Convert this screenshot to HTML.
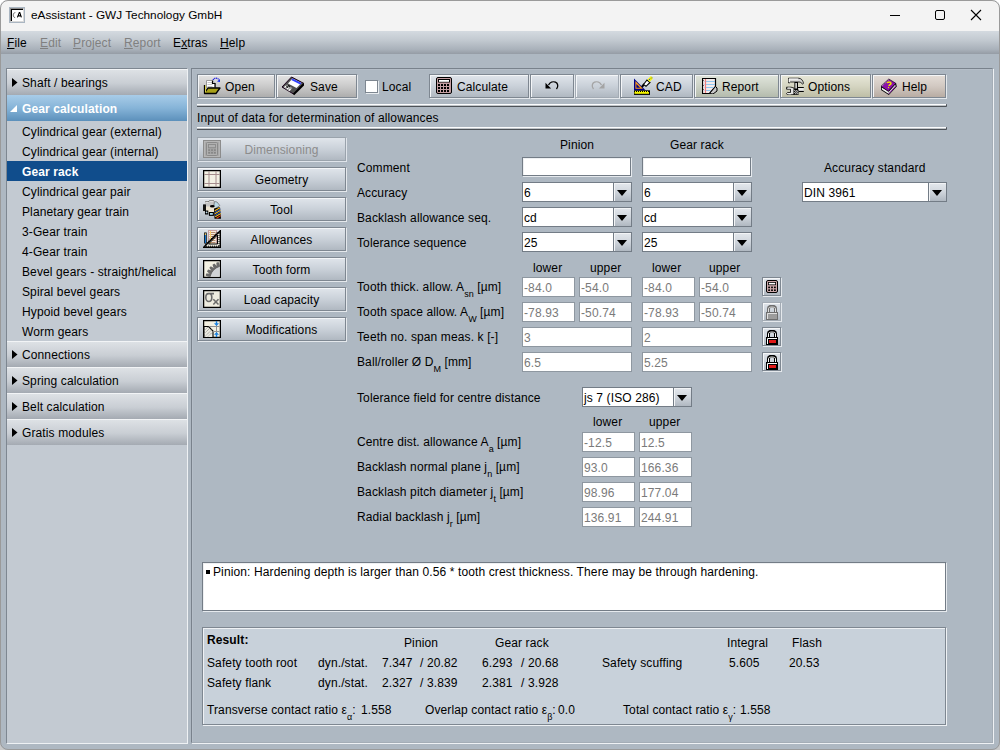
<!DOCTYPE html>
<html><head><meta charset="utf-8">
<style>
*{margin:0;padding:0;box-sizing:border-box}
html,body{width:1000px;height:750px;overflow:hidden;background:linear-gradient(#fff 0,#fff 700px,#c8c8c8 700px)}
body{position:relative;font-family:"Liberation Sans",sans-serif;font-size:12px;color:#000}
.a{position:absolute}
.t{position:absolute;font-size:12px;line-height:14px;white-space:nowrap;letter-spacing:0.12px}
#win{position:absolute;left:0;top:0;width:1000px;height:750px;background:#aeb8c2;border-radius:8px;overflow:hidden}
#frame{position:absolute;left:0;top:0;width:1000px;height:750px;border:1px solid #9a9a9a;border-radius:8px;pointer-events:none}
#title{position:absolute;left:0;top:0;width:1000px;height:31px;background:#f3f3f3}
#menu{position:absolute;left:0;top:31px;width:1000px;height:23px;background:linear-gradient(#d4dae0,#c2c9d0 40%,#a9b1ba 80%,#959ca5)}
.etch{position:absolute;border:1px solid #7e8791;box-shadow:inset 1px 1px 0 #eef1f4,1px 1px 0 #eef1f4}
.btn{position:absolute;border:1px solid #7e8791;box-shadow:inset 1px 1px 0 #f4f6f8,1px 1px 0 #e4e8ec}
.gray{background:linear-gradient(#e4e4e4,#cbcbcb 50%,#adadad)}
.blue{background:linear-gradient(#e0e5eb,#cad1d9 50%,#b0b8c1)}
.green{background:linear-gradient(#e0e5dc,#ccd2c6 50%,#b4bbad)}
.beige{background:linear-gradient(#e7e7d8,#d5d5c2 50%,#bebea6)}
.brown{background:linear-gradient(#e4ddd7,#d2c9c2 50%,#b8aca3)}
.fld{position:absolute;background:#fff;border:1px solid #737c86;height:20px}
.tf{height:19px;box-shadow:1px 1px 0 #e6eaee, inset 1px 1px 0 #eef0f2}
.dis{border-color:#8e97a0}
.fld span{position:absolute;left:1px;top:3px;letter-spacing:0.12px;font-size:12px;line-height:14px;white-space:nowrap}
.dis span{color:#7a7a7a}
.arr{position:absolute;right:0;top:0;width:18px;height:18px;border-left:1px solid #737c86;background:linear-gradient(#e4e8ed,#cfd5dc 50%,#b0b8c1);box-shadow:inset 1px 1px 0 #f2f4f6}
.arr:after{content:"";position:absolute;left:3px;top:7px;border-left:5px solid transparent;border-right:5px solid transparent;border-top:6px solid #000}
.hdr{position:absolute;left:7px;width:180px;height:26px;background:linear-gradient(#f2f4f6 0,#f2f4f6 1px,#dde1e5 1px,#c9ced4 55%,#a4aab2)}
.tri{position:absolute;left:5px;top:9px;width:6px;height:9px;background:#000;clip-path:polygon(0 0,5.5px 4.5px,0 9px)}
.sep{width:750px;height:3px;background:linear-gradient(#fbfcfd 0,#fbfcfd 1px,#d6dade 1px,#a9aeb3 2px,#4c5157 2px,#4c5157 3px);border-right:1px solid #4c5157;border-radius:0 1px 1px 0}
sub{font-size:9px;vertical-align:baseline;position:relative;top:5.5px;letter-spacing:0}
</style></head><body>
<div id="win">
 <div id="title">
  <svg class="a" style="left:9px;top:7px" width="16" height="16" viewBox="0 0 16 16">
   <rect x=".5" y=".5" width="15" height="15" fill="#cfcfcf" stroke="#aab6c2"/>
   <path d="M1 1h14L1 15z" fill="#8a8a8a"/>
   <path d="M15 1v14H1z" fill="#dadada"/>
   <rect x="2" y="2" width="12" height="12" fill="#000"/>
   <rect x="3" y="3" width="11" height="11" fill="#fff"/>
   <path d="M6.3 5.6c-1.6 0-2 1.6-2 2.6s.5 2.4 1.8 2.4" fill="none" stroke="#555" stroke-width=".9"/>
   <path d="M8.4 10.4l1.9-4.8h.5l1.6 4.8M9.1 8.9h2.8" fill="none" stroke="#000" stroke-width="1.1"/>
  </svg>
  <div class="t" style="left:31px;top:8px;font-size:11.8px;letter-spacing:0">eAssistant - GWJ Technology GmbH</div>
  <div class="a" style="left:890px;top:15px;width:10px;height:1px;background:#000"></div>
  <div class="a" style="left:935px;top:10px;width:10px;height:10px;border:1px solid #000;border-radius:2px"></div>
  <svg class="a" style="left:970px;top:9px" width="12" height="12"><path d="M1 1L11 11M11 1L1 11" stroke="#000" stroke-width="1.1"/></svg>
 </div>
 <div id="menu">
  <div class="t" style="left:7px;top:5px"><u>F</u>ile</div>
  <div class="t" style="left:40px;top:5px;color:#808080"><u>E</u>dit</div>
  <div class="t" style="left:73px;top:5px;color:#808080"><u>P</u>roject</div>
  <div class="t" style="left:124px;top:5px;color:#808080"><u>R</u>eport</div>
  <div class="t" style="left:173px;top:5px">E<u>x</u>tras</div>
  <div class="t" style="left:220px;top:5px"><u>H</u>elp</div>
 </div>
 <!-- SIDEBAR -->
 <div class="a" style="left:6px;top:68px;width:182px;height:676px;background:#c3cad2;border-top:1px solid #7e8791;border-left:1px solid #7e8791;border-right:1px solid #eef1f4;border-bottom:1px solid #eef1f4"></div>
 <div class="hdr" style="top:69px"><div class="tri"></div><div class="t" style="left:15px;top:7px">Shaft / bearings</div></div>
 <div class="a" style="left:7px;top:95px;width:180px;height:26px;background:linear-gradient(#a8cce8,#86b4d8 50%,#5c90bb)"></div>
 <svg class="a" style="left:10px;top:104px" width="8" height="9"><path d="M0 8L7 1V8z" fill="#fff"/></svg>
 <div class="t" style="left:22px;top:102px;color:#fff;font-weight:bold">Gear calculation</div>
 <div class="a" style="left:7px;top:161px;width:180px;height:20px;background:#104d8c"></div>
 <div class="t" style="left:22px;top:125px">Cylindrical gear (external)</div>
 <div class="t" style="left:22px;top:145px">Cylindrical gear (internal)</div>
 <div class="t" style="left:22px;top:165px;color:#fff;font-weight:bold">Gear rack</div>
 <div class="t" style="left:22px;top:185px">Cylindrical gear pair</div>
 <div class="t" style="left:22px;top:205px">Planetary gear train</div>
 <div class="t" style="left:22px;top:225px">3-Gear train</div>
 <div class="t" style="left:22px;top:245px">4-Gear train</div>
 <div class="t" style="left:22px;top:265px">Bevel gears - straight/helical</div>
 <div class="t" style="left:22px;top:285px">Spiral bevel gears</div>
 <div class="t" style="left:22px;top:305px">Hypoid bevel gears</div>
 <div class="t" style="left:22px;top:325px">Worm gears</div>
 <div class="hdr" style="top:341px"><div class="tri"></div><div class="t" style="left:15px;top:7px">Connections</div></div>
 <div class="hdr" style="top:367px"><div class="tri"></div><div class="t" style="left:15px;top:7px">Spring calculation</div></div>
 <div class="hdr" style="top:393px"><div class="tri"></div><div class="t" style="left:15px;top:7px">Belt calculation</div></div>
 <div class="hdr" style="top:419px"><div class="tri"></div><div class="t" style="left:15px;top:7px">Gratis modules</div></div>

 <!-- CONTENT PANEL -->
 <div class="a" style="left:191px;top:68px;width:802px;height:675px;border:1px solid #79828c;border-right-color:#a4adb6;border-bottom-color:#a4adb6;box-shadow:inset 1px 1px 0 #b5bec8,1px 1px 0 #eef1f4"></div>

 <!-- TOOLBAR -->
 <div class="btn gray" style="left:197px;top:74px;width:78px;height:24px"></div>
 <div class="btn gray" style="left:276px;top:74px;width:81px;height:24px"></div>
 <div class="a" style="left:365px;top:80px;width:13px;height:13px;background:#fff;border:1px solid #7e8791;box-shadow:1px 1px 0 #e8ecef"></div>
 <div class="btn blue" style="left:429px;top:74px;width:100px;height:24px"></div>
 <div class="btn blue" style="left:530px;top:74px;width:44px;height:24px"></div>
 <div class="btn blue" style="left:575px;top:74px;width:44px;height:24px;border-color:#a3abb4"></div>
 <div class="btn blue" style="left:620px;top:74px;width:73px;height:24px"></div>
 <div class="btn green" style="left:694px;top:74px;width:85px;height:24px"></div>
 <div class="btn beige" style="left:780px;top:74px;width:91px;height:24px"></div>
 <div class="btn brown" style="left:872px;top:74px;width:74px;height:24px"></div>
 <div class="t" style="left:225px;top:80px">Open</div>
 <div class="t" style="left:310px;top:80px">Save</div>
 <div class="t" style="left:382px;top:80px">Local</div>
 <div class="t" style="left:457px;top:80px">Calculate</div>
 <div class="t" style="left:656px;top:80px">CAD</div>
 <div class="t" style="left:722px;top:80px">Report</div>
 <div class="t" style="left:808px;top:80px">Options</div>
 <div class="t" style="left:902px;top:80px">Help</div>

 <!-- open icon -->
 <svg class="a" style="left:200px;top:74px" width="24" height="24" viewBox="0 0 24 24">
  <path d="M6.5 6.5h5.5l3.5 3.5v4h-9z" fill="#fff" stroke="#9a9a9a" stroke-width="1"/>
  <path d="M7.5 8.5h5M7.5 10.5h5M7.5 12.5h5" stroke="#c8c8c8" stroke-width="1"/>
  <path d="M12.5 6.5v3h3" fill="none" stroke="#000" stroke-width="1.2"/>
  <path d="M15 9.5v4" stroke="#000" stroke-width="1.2"/>
  <path d="M4.5 11v8.5h11.5l4-5.5h-12l-3.5 5" fill="#a8a018" stroke="#000" stroke-width="1.3" stroke-linejoin="round"/>
  <path d="M5.5 11.5v7" stroke="#d8d040" stroke-width="1"/>
  <path d="M13 6c1.5-2.5 4.5-2.5 6 0" fill="none" stroke="#2020e0" stroke-width="1.2" stroke-dasharray="1.2 .6"/>
  <path d="M17 7.5l3-2.5v3z" fill="#1830f0"/>
 </svg>
 <!-- save icon -->
 <svg class="a" style="left:280px;top:74px" width="24" height="24" viewBox="0 0 24 24">
  <path d="M2 13L11.5 3 24 9.5 13.5 20z" fill="#505050" stroke="#1a001a" stroke-width="1"/>
  <path d="M12.5 4.5l9 4.5-5 5-8.5-4.5z" fill="#fff"/>
  <path d="M12.5 4.5l9 4.5-1.3 1.4-8.9-4.5z" fill="#3040ff"/>
  <path d="M4 13.5l3-3 5.5 3.5-3.2 3.5z" fill="#9a9a9a"/>
  <path d="M4.5 13.5l1.5-1.5M7 15l1.5-1.5M9 16.5l1.5-1.5" stroke="#fff" stroke-width="1.2"/>
  <path d="M6.5 12.5l1.5 1M8 11.5l2 1" stroke="#000" stroke-width="1.2"/>
  <path d="M13.5 20.5L24 10" stroke="#000" stroke-width="2"/>
 </svg>
 <!-- calc icon -->
 <svg class="a" style="left:436px;top:77px" width="16" height="17" viewBox="0 0 16 17">
  <rect x="0.5" y="0.5" width="15" height="16" rx="1.5" fill="#c49ea2" stroke="#000" stroke-width="1"/>
  <rect x="2" y="2" width="12" height="3.5" fill="#000"/>
  <rect x="3" y="3" width="10" height="1.8" fill="#fff"/>
  <g fill="#000"><rect x="2" y="7" width="2" height="2"/><rect x="5" y="7" width="2" height="2"/><rect x="8" y="7" width="2" height="2"/><rect x="11" y="7" width="2" height="2"/>
  <rect x="2" y="10" width="2" height="2"/><rect x="5" y="10" width="2" height="2"/><rect x="8" y="10" width="2" height="2"/><rect x="11" y="10" width="2" height="2"/>
  <rect x="2" y="13" width="2" height="2"/><rect x="5" y="13" width="2" height="2"/><rect x="8" y="13" width="2" height="2"/><rect x="11" y="13" width="2" height="2"/></g>
 </svg>
 <!-- undo -->
 <svg class="a" style="left:544px;top:80px" width="16" height="11" viewBox="0 0 16 11">
  <path d="M4.5 5C6 2.2 9 1.2 11.5 2.2c2.6 1.1 3 4.3 1 6.8" fill="none" stroke="#000" stroke-width="1.3"/>
  <path d="M1.5 2.8v5.6h5.6z" fill="#000"/>
 </svg>
 <!-- redo -->
 <svg class="a" style="left:590px;top:80px" width="16" height="11" viewBox="0 0 16 11">
  <path d="M11.5 5C10 2.2 7 1.2 4.5 2.2c-2.6 1.1-3 4.3-1 6.8" fill="none" stroke="#a4a4a4" stroke-width="1.3"/>
  <path d="M14.5 2.8v5.6H8.9z" fill="#a4a4a4"/>
 </svg>
 <!-- CAD -->
 <svg class="a" style="left:633px;top:76px" width="20" height="20" viewBox="0 0 20 20">
  <path d="M1 2.5v11.8h11.5z" fill="#00008a"/>
  <path d="M2.4 5v7.8h7.6z" fill="#ff9a18"/>
  <path d="M3.4 8v3.8h3.8z" fill="#00008a"/>
  <rect x="1" y="14.3" width="16" height="4.6" fill="#000"/>
  <rect x="1.5" y="16" width="14.5" height="1.8" fill="#f4f400"/>
  <path d="M2 15.5h1M4 15.5h1M6 15.5h1M8 15.5h1M10 15.5h1M12 15.5h1M14 15.5h1" stroke="#f4f400" stroke-width="1"/>
  <path d="M8.8 11l2.5-3" stroke="#000" stroke-width="2"/>
  <path d="M10.5 8.5l3.5-4.5 3 2.5-4 3.8z" fill="#fff" stroke="#000" stroke-width="1.1"/>
  <path d="M14.5 3.5l3.5-3.5 2 2.2-3.5 3.8z" fill="#f4f400"/>
  <path d="M16 4l1-1M18 2.5l1-1" stroke="#2040c0" stroke-width=".9"/>
 </svg>
 <!-- report -->
 <svg class="a" style="left:702px;top:78px" width="16" height="16" viewBox="0 0 16 16">
  <path d="M.5 .5h13v8l-6 7h-7z" fill="#f4ecec" stroke="#000" stroke-width="1.2"/>
  <path d="M2.5 3.5h10.5M2.5 6.5h10.5M2.5 9.5h9M2.5 12.5h6" stroke="#90c8f0" stroke-width="1"/>
  <path d="M3.5 1v14" stroke="#f08080" stroke-width="1.2"/>
  <path d="M1.5 2.5v.5M1.5 7v.5M1.5 11.5v.5" stroke="#000" stroke-width="1"/>
  <path d="M7.5 15.5l6-7 1.5 1.5v3l-4 3z" fill="#c8c8c8" stroke="#000" stroke-width="1"/>
 </svg>
 <!-- options -->
 <svg class="a" style="left:786px;top:77px" width="18" height="18" viewBox="0 0 18 18">
  <path d="M2.5 1.2h10c2.5 0 4.5 2 5 5.2l-1 .8c-.8-1.6-2-2.2-3.5-2.2H4.5l-1 .8h-1z" fill="#d8d8d8" stroke="#000" stroke-width=".8"/>
  <path d="M3 2h9" stroke="#fff" stroke-width="1.2"/>
  <path d="M3.2 2v3" stroke="#fff" stroke-width="1"/>
  <rect x="8.4" y="5" width="3.6" height="8" fill="#000"/>
  <rect x="9.4" y="6" width="1.4" height="5.5" fill="#fff"/>
  <path d="M12 10.5h5.8v4H12z" fill="#cfcfcf"/>
  <path d="M12 10.5h5.8M12 14.5h5.8" stroke="#000" stroke-width="1"/>
  <path d="M12.5 12h5" stroke="#fff" stroke-width="1"/>
  <path d="M.5 10.2h4.5l3 .8v6.5l-3 .3H1.5l-1-1.3 1-1h3V12.2H.5z" fill="#e4e4e4" stroke="#000" stroke-width=".8"/>
  <path d="M2 11h2.5M2.5 16.8h2.5" stroke="#fff" stroke-width=".8"/>
  <rect x="7.8" y="12.6" width="4.8" height="5.2" fill="#000"/>
  <g fill="#fff"><rect x="8.3" y="13.1" width="1" height="1"/><rect x="10.3" y="13.1" width="1" height="1"/><rect x="9.3" y="14.1" width="1" height="1"/><rect x="11.3" y="14.1" width="1" height="1"/><rect x="8.3" y="15.1" width="1" height="1"/><rect x="10.3" y="15.1" width="1" height="1"/><rect x="9.3" y="16.1" width="1" height="1"/><rect x="11.3" y="16.1" width="1" height="1"/></g>
 </svg>
 <!-- help -->
 <svg class="a" style="left:880px;top:78px" width="18" height="18" viewBox="0 0 18 18">
  <path d="M1 8.5v3.5l7.8 5 8-8.5-.8-3.5z" fill="#000"/>
  <path d="M1.8 9.5v2l7 4.5v-2.2z" fill="#f0f0f0"/>
  <path d="M8.8 13.8v2.2l7-7.5-.6-2z" fill="#d8d8d8"/>
  <path d="M8.8 15.6l7-7.6" stroke="#9010b0" stroke-width=".9"/>
  <path d="M8.8 1L1 8.3l7.3 5L15.8 5.3z" fill="#8a12a8" stroke="#000" stroke-width=".6"/>
  <path d="M2 8l6.8-6.2" stroke="#d8c0e0" stroke-width=".8" stroke-dasharray="1 1"/>
  <path d="M7.2 5.2c.3-1.6 3.8-1.8 3.8.2 0 1.3-1.9 1.3-2 2.6" fill="none" stroke="#f0e800" stroke-width="1.5"/>
  <path d="M8 9.3l1 .4" stroke="#f0e800" stroke-width="1.4"/>
 </svg>


 <!-- SEPARATORS -->
 <div class="a sep" style="left:197px;top:104px"></div>
 <div class="t" style="left:197px;top:111px">Input of data for determination of allowances</div>
 <div class="a sep" style="left:197px;top:127px"></div>

 <!-- NAV BUTTONS -->
 <div class="btn blue" style="left:197px;top:137px;width:149px;height:24px;border-color:#9aa3ac;box-shadow:inset 1px 1px 0 #dfe4ea,1px 1px 0 #dfe4ea"></div>
 <div class="btn blue" style="left:197px;top:167px;width:149px;height:24px"></div>
 <div class="btn blue" style="left:197px;top:197px;width:149px;height:24px"></div>
 <div class="btn blue" style="left:197px;top:227px;width:149px;height:24px"></div>
 <div class="btn blue" style="left:197px;top:257px;width:149px;height:24px"></div>
 <div class="btn blue" style="left:197px;top:287px;width:149px;height:24px"></div>
 <div class="btn blue" style="left:197px;top:317px;width:149px;height:24px"></div>
 <div class="t" style="left:221px;width:121px;text-align:center;top:143px;color:#8c8c8c">Dimensioning</div>
 <div class="t" style="left:221px;width:121px;text-align:center;top:173px">Geometry</div>
 <div class="t" style="left:221px;width:121px;text-align:center;top:203px">Tool</div>
 <div class="t" style="left:221px;width:121px;text-align:center;top:233px">Allowances</div>
 <div class="t" style="left:221px;width:121px;text-align:center;top:263px">Tooth form</div>
 <div class="t" style="left:221px;width:121px;text-align:center;top:293px">Load capacity</div>
 <div class="t" style="left:221px;width:121px;text-align:center;top:323px">Modifications</div>

 <!-- dim icon -->
 <svg class="a" style="left:203px;top:140px" width="18" height="18" viewBox="0 0 18 18">
  <rect x=".5" y=".5" width="17" height="17" fill="#a9a9a9" stroke="#8c8c8c"/>
  <rect x="1.5" y="1.5" width="15" height="15" fill="none" stroke="#b6b6b6"/>
  <rect x="3.5" y="2.5" width="11" height="13" rx="1" fill="#a4a4a4" stroke="#8a8a8a" stroke-width="1"/>
  <rect x="4.5" y="3.5" width="9" height="11" fill="none" stroke="#b4b4b4" stroke-width=".8"/>
  <rect x="5.5" y="4.5" width="7" height="3.2" fill="#b0b0b0" stroke="#8a8a8a" stroke-width=".9"/>
  <g fill="#858585"><rect x="5.2" y="9.3" width="1.8" height="1.6"/><rect x="8.1" y="9.3" width="1.8" height="1.6"/><rect x="11" y="9.3" width="1.8" height="1.6"/><rect x="5.2" y="12" width="1.8" height="1.6"/><rect x="8.1" y="12" width="1.8" height="1.6"/><rect x="11" y="12" width="1.8" height="1.6"/></g>
 </svg>
 <!-- geometry icon -->
 <svg class="a" style="left:203px;top:170px" width="18" height="18" viewBox="0 0 18 18">
  <rect x=".6" y=".6" width="16.8" height="16.8" fill="#f3f1e4" stroke="#000" stroke-width="1.3"/>
  <path d="M6 1.2v15.6M13 1.2v15.6M1.2 4.5h15.6M1.2 13.5h15.6" stroke="#a48c8c" stroke-width="1"/>
 </svg>
 <!-- tool icon -->
 <svg class="a" style="left:203px;top:200px" width="18" height="19" viewBox="0 0 18 19">
  <path d="M0 4.5h2V1h4.2V0h4.8v3h1l1 2L11 9 8 12H0z" fill="#c4c4c4"/>
  <path d="M2.5 1.5h3.5M6.5 .5h4M.5 5h2" stroke="#606060" stroke-width="1"/>
  <path d="M3 2.2h2.5M7 1.2h3" stroke="#e8e8e8" stroke-width="1"/>
  <rect x="0" y="4.5" width="3" height="6.5" fill="#111"/>
  <path d="M11.5 1.5l2.5.5 2.8 3.5-4 3-2.3-1z" fill="#bcd8e4" stroke="#666" stroke-width=".7"/>
  <path d="M3 6.5h8.5l2 2v4.5H3z" fill="#ece4d2"/>
  <ellipse cx="9.3" cy="6.3" rx="2.4" ry="1.2" fill="#000"/>
  <path d="M2 10.5h3.3v4H2z" fill="#000"/>
  <circle cx="3.6" cy="12.4" r=".9" fill="#bcd8e8"/>
  <rect x="5.9" y="12" width="5" height="3.9" fill="#000"/>
  <rect x="7" y="13" width="2.8" height="1.8" fill="#a8d8ec"/>
  <path d="M11 8.5l6-1.5 1 11.8h-6.5z" fill="#000"/>
  <path d="M11.8 10.8l5.2-3M11.8 13.8l5.6-3.2M12.2 16.8l5.6-3.2" stroke="#f4b820" stroke-width="1.1"/>
  <path d="M11.8 12.3l5.5-3.1M12 15.3l5.6-3.2" stroke="#2458c8" stroke-width="1"/>
  <path d="M13.5 18.2l4.2-2.6" stroke="#e84818" stroke-width="1.1"/>
 </svg>
 <!-- allowances icon -->
 <svg class="a" style="left:203px;top:230px" width="18" height="18" viewBox="0 0 18 18">
  <rect x="5.5" y=".5" width="8" height="14" fill="#f4ece0" stroke="#c8a0a0" stroke-width="1"/>
  <path d="M6.5 2.5h6M6.5 4.5h6M6.5 6.5h6M6.5 8.5h6M6.5 10.5h6M6.5 12.5h6" stroke="#b08060" stroke-width=".9"/>
  <path d="M7.5 1v13" stroke="#f8d070" stroke-width="1"/>
  <path d="M.5 17.5L17.5 .5v17z M5.5 14h9V5z" fill="#eceadf" fill-rule="evenodd"/>
  <path d="M.7 17.3L17.3.7v16.6z" fill="none" stroke="#000" stroke-width="1.4"/>
  <path d="M5.5 14h9V5z" fill="none" stroke="#000" stroke-width="1"/>
  <path d="M2.5 14.5l12-12" stroke="#000" stroke-width="1.1" stroke-dasharray="1 1"/>
  <path d="M16 3v13.5M3 16.2h13" stroke="#000" stroke-width="1" stroke-dasharray="1 1"/>
  <path d="M2.4 2.5v11" stroke="#000" stroke-width="2.6"/>
  <path d="M2.4 5v8" stroke="#1878d0" stroke-width="1.2"/>
  <path d="M2.4 3.2v1.8" stroke="#e8c870" stroke-width="1.2"/>
 </svg>
 <!-- tooth form icon -->
 <svg class="a" style="left:203px;top:260px" width="18" height="18" viewBox="0 0 18 18">
  <rect x=".6" y=".6" width="16.8" height="16.8" fill="#f4f2e4" stroke="#000" stroke-width="1.3"/>
  <clipPath id="cTF"><rect x="1.3" y="1.3" width="15.4" height="15.4"/></clipPath>
  <g clip-path="url(#cTF)">
   <circle cx="20.1" cy="19.1" r="13.6" fill="#d0d3d6" stroke="#6a6a6a" stroke-width="1.6"/>
   <g fill="#6a6a6a"><path d="M17.900000000000002 6.100000000000001 L19.0 1.3000000000000007 H21.200000000000003 L22.3 6.100000000000001z" transform="rotate(-75 20.1 19.1)"/><path d="M17.900000000000002 6.100000000000001 L19.0 1.3000000000000007 H21.200000000000003 L22.3 6.100000000000001z" transform="rotate(-61 20.1 19.1)"/><path d="M17.900000000000002 6.100000000000001 L19.0 1.3000000000000007 H21.200000000000003 L22.3 6.100000000000001z" transform="rotate(-47 20.1 19.1)"/><path d="M17.900000000000002 6.100000000000001 L19.0 1.3000000000000007 H21.200000000000003 L22.3 6.100000000000001z" transform="rotate(-33 20.1 19.1)"/><path d="M17.900000000000002 6.100000000000001 L19.0 1.3000000000000007 H21.200000000000003 L22.3 6.100000000000001z" transform="rotate(-19 20.1 19.1)"/><path d="M17.900000000000002 6.100000000000001 L19.0 1.3000000000000007 H21.200000000000003 L22.3 6.100000000000001z" transform="rotate(-5 20.1 19.1)"/></g>
  </g>
 </svg>
 <!-- load capacity icon -->
 <svg class="a" style="left:203px;top:290px" width="18" height="18" viewBox="0 0 18 18">
  <rect x=".6" y=".6" width="16.8" height="16.8" fill="#eeece0" stroke="#000" stroke-width="1.3"/>
  <path d="M11 3.6H5.5C3.8 3.6 2.8 5.5 2.8 7.5s1.2 4 3 4 3-1.8 3-4-.8-3.5-1.8-3.9" fill="none" stroke="#6c6c6c" stroke-width="1.6"/>
  <path d="M10.3 9.3l5.2 5.2M15.5 9.3l-5.2 5.2" stroke="#6c6c6c" stroke-width="1.6"/>
 </svg>
 <!-- modifications icon -->
 <svg class="a" style="left:203px;top:320px" width="18" height="18" viewBox="0 0 18 18">
  <rect x=".6" y=".6" width="16.8" height="16.8" fill="#f2f0e2" stroke="#000" stroke-width="1.3"/>
  <path d="M1 6.5h4.5l4.5 4.5v6.5H1z" fill="#ecebe2" stroke="#000" stroke-width="1.1"/>
  <path d="M1.5 10.5l4-4M1.5 13.5l6-6M2 16.5l7-7M5 16.5l4.5-4.5" stroke="#8a8a8a" stroke-width="1" stroke-dasharray="1 .8"/>
  <path d="M6 6.5h10.5M10 11.5h6.5" stroke="#909090" stroke-width="1"/>
  <path d="M13.5 1v16" stroke="#909090" stroke-width="1"/>
  <path d="M13.5 1.2v3M13.5 14v3" stroke="#1880e0" stroke-width="1.4"/>
  <path d="M11 3.2h5l-2.5 2.8zM11 14.8h5l-2.5-2.8z" fill="#1880e0"/>
 </svg>

 <!-- FORM -->
 <div class="t" style="left:560px;top:138px">Pinion</div>
 <div class="t" style="left:670px;top:138px">Gear rack</div>
 <div class="t" style="left:357px;top:161px">Comment</div>
 <div class="t" style="left:357px;top:186px">Accuracy</div>
 <div class="t" style="left:357px;top:211px">Backlash allowance seq.</div>
 <div class="t" style="left:357px;top:236px">Tolerance sequence</div>
 <div class="fld tf" style="left:522px;top:157px;width:109px"></div>
 <div class="fld tf" style="left:642px;top:157px;width:109px"></div>
 <div class="fld" style="left:522px;top:182px;width:110px"><span>6</span><div class="arr"></div></div>
 <div class="fld" style="left:642px;top:182px;width:110px"><span>6</span><div class="arr"></div></div>
 <div class="fld" style="left:522px;top:207px;width:110px"><span>cd</span><div class="arr"></div></div>
 <div class="fld" style="left:642px;top:207px;width:110px"><span>cd</span><div class="arr"></div></div>
 <div class="fld" style="left:522px;top:232px;width:110px"><span>25</span><div class="arr"></div></div>
 <div class="fld" style="left:642px;top:232px;width:110px"><span>25</span><div class="arr"></div></div>
 <div class="t" style="left:824px;top:161px">Accuracy standard</div>
 <div class="fld" style="left:802px;top:182px;width:145px"><span>DIN 3961</span><div class="arr"></div></div>

 <div class="t" style="left:533px;top:261px">lower</div>
 <div class="t" style="left:590px;top:261px">upper</div>
 <div class="t" style="left:652px;top:261px">lower</div>
 <div class="t" style="left:709px;top:261px">upper</div>
 <div class="t" style="left:357px;top:280px">Tooth thick. allow. A<sub>sn</sub> [&micro;m]</div>
 <div class="t" style="left:357px;top:305px">Tooth space allow. A<sub>W</sub> [&micro;m]</div>
 <div class="t" style="left:357px;top:330px">Teeth no. span meas. k [-]</div>
 <div class="t" style="left:357px;top:355px">Ball/roller &Oslash; D<sub>M</sub> [mm]</div>
 <div class="fld dis" style="left:522px;top:277px;width:53px"><span>-84.0</span></div>
 <div class="fld dis" style="left:579px;top:277px;width:53px"><span>-54.0</span></div>
 <div class="fld dis" style="left:642px;top:277px;width:53px"><span>-84.0</span></div>
 <div class="fld dis" style="left:699px;top:277px;width:53px"><span>-54.0</span></div>
 <div class="fld dis" style="left:522px;top:302px;width:53px"><span>-78.93</span></div>
 <div class="fld dis" style="left:579px;top:302px;width:53px"><span>-50.74</span></div>
 <div class="fld dis" style="left:642px;top:302px;width:53px"><span>-78.93</span></div>
 <div class="fld dis" style="left:699px;top:302px;width:53px"><span>-50.74</span></div>
 <div class="fld dis" style="left:522px;top:327px;width:110px"><span>3</span></div>
 <div class="fld dis" style="left:642px;top:327px;width:110px"><span>2</span></div>
 <div class="fld dis" style="left:522px;top:352px;width:110px"><span>6.5</span></div>
 <div class="fld dis" style="left:642px;top:352px;width:110px"><span>5.25</span></div>
 <div class="btn blue" style="left:762px;top:277px;width:19px;height:19px"></div>
 <div class="btn blue" style="left:762px;top:302px;width:19px;height:19px;border-color:#a3abb4"></div>
 <div class="btn blue" style="left:762px;top:327px;width:19px;height:19px"></div>
 <div class="btn blue" style="left:762px;top:352px;width:19px;height:19px"></div>

 <svg class="a" style="left:766px;top:280px" width="12" height="13" viewBox="0 0 12 13">
  <rect x=".5" y=".5" width="11" height="12" rx="1.5" fill="#cca8aa" stroke="#000" stroke-width="1"/>
  <rect x="2" y="2" width="8" height="3.2" fill="#000"/><rect x="2.8" y="2.8" width="6.4" height="1.6" fill="#fff"/>
  <g fill="#000"><rect x="2.2" y="6.6" width="1.8" height="1.6"/><rect x="5.1" y="6.6" width="1.8" height="1.6"/><rect x="8" y="6.6" width="1.8" height="1.6"/><rect x="2.2" y="9.4" width="1.8" height="1.6"/><rect x="5.1" y="9.4" width="1.8" height="1.6"/><rect x="8" y="9.4" width="1.8" height="1.6"/></g>
 </svg>
 <svg class="a" style="left:766px;top:305px" width="12" height="15" viewBox="0 0 12 15">
  <path d="M2.5 8V3.2C2.5 .6 9.5 .6 9.5 3.2V8" fill="none" stroke="#6e6e6e" stroke-width="3"/>
  <path d="M2.5 7.5V3.4C2.5 1.6 9.5 1.6 9.5 3.4V7.5" fill="none" stroke="#e0e0e0" stroke-width="1"/>
  <rect x=".5" y="7.5" width="11" height="7" fill="#9c9c9c" stroke="#6e6e6e" stroke-width="1"/>
  <path d="M1.5 14V8.5h9.5" fill="none" stroke="#e0e0e0" stroke-width="1"/>
  <rect x="3" y="10" width="7" height="3" fill="#9c9c9c"/>
 </svg>
 <svg class="a" style="left:766px;top:330px" width="12" height="15" viewBox="0 0 12 15">
  <path d="M2.5 8V3.2C2.5 .6 9.5 .6 9.5 3.2V8" fill="none" stroke="#000" stroke-width="3"/>
  <path d="M2.5 7.5V3.4C2.5 1.6 9.5 1.6 9.5 3.4V7.5" fill="none" stroke="#fff" stroke-width="1"/>
  <rect x=".5" y="7.5" width="11" height="7" fill="#000" stroke="#000" stroke-width="1"/>
  <path d="M1.5 14V8.5h9.5" fill="none" stroke="#fff" stroke-width="1"/>
  <rect x="3" y="10" width="7" height="3" fill="#e01818"/>
 </svg>
 <svg class="a" style="left:766px;top:355px" width="12" height="15" viewBox="0 0 12 15">
  <path d="M2.5 8V3.2C2.5 .6 9.5 .6 9.5 3.2V8" fill="none" stroke="#000" stroke-width="3"/>
  <path d="M2.5 7.5V3.4C2.5 1.6 9.5 1.6 9.5 3.4V7.5" fill="none" stroke="#fff" stroke-width="1"/>
  <rect x=".5" y="7.5" width="11" height="7" fill="#000" stroke="#000" stroke-width="1"/>
  <path d="M1.5 14V8.5h9.5" fill="none" stroke="#fff" stroke-width="1"/>
  <rect x="3" y="10" width="7" height="3" fill="#e01818"/>
 </svg>

 <div class="t" style="left:357px;top:391px">Tolerance field for centre distance</div>
 <div class="fld" style="left:582px;top:387px;width:110px"><span>js 7 (ISO 286)</span><div class="arr"></div></div>
 <div class="t" style="left:593px;top:415px">lower</div>
 <div class="t" style="left:649px;top:415px">upper</div>
 <div class="t" style="left:357px;top:435px">Centre dist. allowance A<sub>a</sub> [&micro;m]</div>
 <div class="t" style="left:357px;top:460px">Backlash normal plane j<sub>n</sub> [&micro;m]</div>
 <div class="t" style="left:357px;top:485px">Backlash pitch diameter j<sub>t</sub> [&micro;m]</div>
 <div class="t" style="left:357px;top:510px">Radial backlash j<sub>r</sub> [&micro;m]</div>
 <div class="fld dis" style="left:582px;top:432px;width:53px"><span>-12.5</span></div>
 <div class="fld dis" style="left:639px;top:432px;width:53px"><span>12.5</span></div>
 <div class="fld dis" style="left:582px;top:457px;width:53px"><span>93.0</span></div>
 <div class="fld dis" style="left:639px;top:457px;width:53px"><span>166.36</span></div>
 <div class="fld dis" style="left:582px;top:482px;width:53px"><span>98.96</span></div>
 <div class="fld dis" style="left:639px;top:482px;width:53px"><span>177.04</span></div>
 <div class="fld dis" style="left:582px;top:507px;width:53px"><span>136.91</span></div>
 <div class="fld dis" style="left:639px;top:507px;width:53px"><span>244.91</span></div>

 <!-- MESSAGE -->
 <div class="fld tf" style="left:202px;top:562px;width:744px;height:49px"></div>
 <div class="a" style="left:206px;top:570px;width:4px;height:4px;background:#000"></div>
 <div class="t" style="left:213px;top:565px">Pinion: Hardening depth is larger than 0.56 * tooth crest thickness. There may be through hardening.</div>

 <!-- RESULT -->
 <div class="etch" style="left:202px;top:627px;width:744px;height:98px;background:#c8d1da"></div>
 <div class="t" style="left:207px;top:633px;font-weight:bold">Result:</div>
 <div class="t" style="left:404px;top:636px">Pinion</div>
 <div class="t" style="left:495px;top:636px">Gear rack</div>
 <div class="t" style="left:727px;top:636px">Integral</div>
 <div class="t" style="left:792px;top:636px">Flash</div>
 <div class="t" style="left:207px;top:656px">Safety tooth root</div>
 <div class="t" style="left:318px;top:656px">dyn./stat.</div>
 <div class="t" style="left:382px;top:656px">7.347</div>
 <div class="t" style="left:420px;top:656px">/ 20.82</div>
 <div class="t" style="left:482px;top:656px">6.293</div>
 <div class="t" style="left:521px;top:656px">/ 20.68</div>
 <div class="t" style="left:602px;top:656px">Safety scuffing</div>
 <div class="t" style="left:729px;top:656px">5.605</div>
 <div class="t" style="left:789px;top:656px">20.53</div>
 <div class="t" style="left:207px;top:676px">Safety flank</div>
 <div class="t" style="left:318px;top:676px">dyn./stat.</div>
 <div class="t" style="left:382px;top:676px">2.327</div>
 <div class="t" style="left:420px;top:676px">/ 3.839</div>
 <div class="t" style="left:482px;top:676px">2.381</div>
 <div class="t" style="left:521px;top:676px">/ 3.928</div>
 <div class="t" style="left:207px;top:703px">Transverse contact ratio &epsilon;<sub>&alpha;</sub>:</div>
 <div class="t" style="left:361px;top:703px">1.558</div>
 <div class="t" style="left:425px;top:703px">Overlap contact ratio &epsilon;<sub>&beta;</sub>:</div>
 <div class="t" style="left:558px;top:703px">0.0</div>
 <div class="t" style="left:623px;top:703px">Total contact ratio &epsilon;<sub>&gamma;</sub>:</div>
 <div class="t" style="left:740px;top:703px">1.558</div>

</div>
<div id="frame"></div>
</body></html>
